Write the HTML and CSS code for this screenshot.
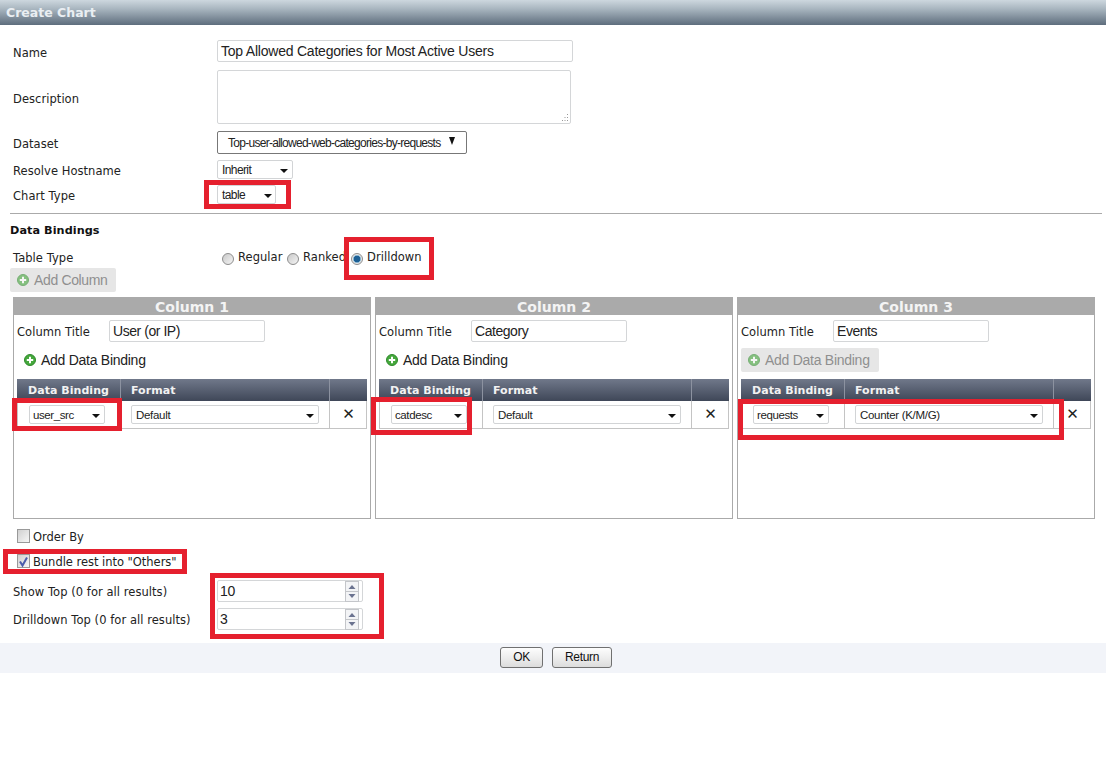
FILE: index.html
```html
<!DOCTYPE html>
<html lang="en">
<head>
<meta charset="utf-8">
<title>Create Chart</title>
<link rel="stylesheet" href="styles.css">
</head>
<body>
<svg class="defs" width="0" height="0" aria-hidden="true">
  <defs>
    <symbol id="plus" viewBox="0 0 12 12">
      <circle cx="6" cy="6" r="5.5" fill="#45a83c" stroke="#2f8a2c" stroke-width="1"/>
      <path d="M6 2.8v6.4M2.8 6h6.4" stroke="#fff" stroke-width="2"/>
    </symbol>
    <symbol id="spin" viewBox="0 0 14 21">
      <rect x=".5" y=".5" width="13" height="20" fill="#f3f4f6" stroke="#c4c6ca"/>
      <path d="M1 10.5h12" stroke="#c4c6ca"/>
      <path d="M7 4l3.5 4h-7z" fill="#6b7390"/>
      <path d="M7 17l3.5-4h-7z" fill="#6b7390"/>
    </symbol>
  </defs>
</svg>
<header class="titlebar">Create Chart</header>
<main class="main">
  <div class="row row-name"><span class="label">Name</span><div class="field field-name">Top Allowed Categories for Most Active Users</div></div>
  <div class="row row-desc"><span class="label">Description</span><div class="field field-desc"><svg class="grip" width="9" height="9" viewBox="0 0 9 9"><path d="M7.5 1v1M5 4v1M7.5 4v1M2.500 7v1M5 7v1M7.5 7v1" stroke="#999"/></svg></div></div>
  <div class="row row-dataset"><span class="label">Dataset</span><div class="select select-dataset"><span class="sel-text">Top-user-allowed-web-categories-by-requests</span><i class="caret caret-tall"></i></div></div>
  <div class="row row-resolve"><span class="label">Resolve Hostname</span><div class="select select-resolve"><span class="sel-text">Inherit</span><i class="caret"></i></div></div>
  <div class="row row-type"><span class="label">Chart Type</span><div class="select select-type"><span class="sel-text">table</span><i class="caret"></i></div></div>
  <hr class="divider">
  <h2 class="section">Data Bindings</h2>
  <div class="row row-table"><span class="label label-up">Table Type</span>
    <div class="radios">
      <span class="radio-item radio-regular"><i class="radio"></i>Regular</span>
      <span class="radio-item radio-ranked"><i class="radio"></i>Ranked</span>
      <span class="radio-item"><i class="radio radio-on"></i>Drilldown</span>
    </div>
  </div>
  <div class="add-column"><svg class="plus plus-off"><use href="#plus"/></svg>Add Column</div>

  <div class="columns">
    <section class="column">
      <h3 class="col-head">Column 1</h3>
      <div class="col-title"><span class="label label-up col-label">Column Title</span><div class="field field-col">User (or IP)</div></div>
      <div class="add-bind"><svg class="plus"><use href="#plus"/></svg>Add Data Binding</div>
      <div class="bind">
        <div class="bind-row bind-head"><span class="bh">Data Binding</span><span class="bh">Format</span><span class="bh"></span></div>
        <div class="bind-row bind-body"><span class="bc"><div class="select select-src"><span class="sel-text">user_src</span><i class="caret"></i></div></span><span class="bc"><div class="select select-fmt"><span class="sel-text">Default</span><i class="caret"></i></div></span><span class="bc bc-x">✕</span></div>
      </div>
    </section>
    <section class="column">
      <h3 class="col-head">Column 2</h3>
      <div class="col-title"><span class="label label-up col-label">Column Title</span><div class="field field-col">Category</div></div>
      <div class="add-bind"><svg class="plus"><use href="#plus"/></svg>Add Data Binding</div>
      <div class="bind">
        <div class="bind-row bind-head"><span class="bh">Data Binding</span><span class="bh">Format</span><span class="bh"></span></div>
        <div class="bind-row bind-body"><span class="bc"><div class="select select-src"><span class="sel-text">catdesc</span><i class="caret"></i></div></span><span class="bc"><div class="select select-fmt"><span class="sel-text">Default</span><i class="caret"></i></div></span><span class="bc bc-x">✕</span></div>
      </div>
    </section>
    <section class="column">
      <h3 class="col-head">Column 3</h3>
      <div class="col-title"><span class="label label-up col-label">Column Title</span><div class="field field-col">Events</div></div>
      <div class="add-bind add-bind-off"><svg class="plus plus-off"><use href="#plus"/></svg>Add Data Binding</div>
      <div class="bind">
        <div class="bind-row bind-head"><span class="bh">Data Binding</span><span class="bh">Format</span><span class="bh"></span></div>
        <div class="bind-row bind-body"><span class="bc"><div class="select select-src"><span class="sel-text">requests</span><i class="caret"></i></div></span><span class="bc"><div class="select select-fmt"><span class="sel-text">Counter (K/M/G)</span><i class="caret"></i></div></span><span class="bc bc-x">✕</span></div>
      </div>
    </section>
  </div>

  <label class="check check-order"><i class="box"></i><span class="check-text">Order By</span></label>
  <label class="check check-bundle"><i class="box"><svg width="13" height="13" viewBox="0 0 13 13"><path d="M3 6.500l2.500 4L10 2.500" fill="none" stroke="#4a5cab" stroke-width="2"/></svg></i><span class="check-text">Bundle rest into "Others"</span></label>
  <div class="row row-top row-show"><span class="label label-up">Show Top (0 for all results)</span><div class="field field-num">10<svg class="spin"><use href="#spin"/></svg></div></div>
  <div class="row row-top row-drill"><span class="label label-up">Drilldown Top (0 for all results)</span><div class="field field-num">3<svg class="spin"><use href="#spin"/></svg></div></div>
</main>
<footer class="footer"><button class="btn btn-ok">OK</button><button class="btn btn-return">Return</button></footer>

<div class="mark mark-type"></div>
<div class="mark mark-drill"></div>
<div class="mark mark-c1"></div>
<div class="mark mark-c2"></div>
<div class="mark mark-c3"></div>
<div class="mark mark-bundle"></div>
<div class="mark mark-top"></div>
</body>
</html>
```
FILE: styles.css
```css
* { box-sizing: border-box; }
html, body { margin: 0; padding: 0; }
body {
  position: relative;
  width: 1106px;
  height: 758px;
  overflow: hidden;
  background: #fff;
  color: #222;
  font: 11.500px "DejaVu Sans", Verdana, sans-serif;
  letter-spacing: .05px;
}
.defs { position: absolute; }
.titlebar {
  height: 25px;
  padding: 4px 0 0 6px;
  background: linear-gradient(#cdd7de, #a9b6c0 35%, #5e6d7d);
  color: #e9eef2;
  font-weight: bold;
  font-size: 12.500px;
  letter-spacing: 0;
  line-height: 17px;
}
.main { padding-top: 15px; height: 618px; }
.row {
  display: grid;
  grid-template-columns: 204px auto;
  justify-content: start;
  align-items: center;
  padding-left: 13px;
}
.label { line-height: 14px; padding-top: 3px; }
.label-up { padding-top: 1px; }
.field {
  background: #fff;
  border: 1px solid #d4d6d8;
  border-radius: 2px;
  font-family: "Liberation Sans", Arial, sans-serif;
  color: #222;
  letter-spacing: 0;
}
.field-name { width: 356px; height: 22px; padding-left: 3px; font-size: 14px; line-height: 20px; letter-spacing: -.22px; }
.row-desc { margin-top: 8px; }
.field-desc { position: relative; width: 354px; height: 54px; }
.grip { position: absolute; right: 1px; bottom: 1px; }
.row-dataset { margin-top: 7px; }
.row-resolve { margin-top: 6px; }
.row-type { margin-top: 6px; }
.select {
  display: flex;
  align-items: center;
  justify-content: space-between;
  background: #fff;
  border: 1px solid #d2d4d6;
  border-radius: 2px;
  font-family: "Liberation Sans", Arial, sans-serif;
  font-size: 12px;
  letter-spacing: -.6px;
  color: #222;
  white-space: nowrap;
}
.sel-text { display: block; }
.caret {
  display: block;
  flex: none;
  width: 0;
  height: 0;
  border-left: 4px solid transparent;
  border-right: 4px solid transparent;
  border-top: 4px solid #111;
  margin-top: 2px;
}
.caret-tall { border-left-width: 3.500px; border-right-width: 3.500px; border-top-width: 8px; margin-top: -3px; }
.select-dataset { width: 250px; height: 23px; padding: 0 11px 0 10px; border-color: #777; letter-spacing: -.72px; }
.select-resolve { width: 76px; height: 19px; padding: 0 4px 0 4px; }
.select-type { width: 59px; height: 19px; padding: 0 3px 0 4px; }
.divider { height: 1px; margin: 9px 4px 0 10px; border: 0; background: #aaa; }
.section { margin: 10px 0 0 10px; font-size: 11.250px; line-height: 14px; font-weight: bold; color: #111; }
.row-table { margin-top: 10px; height: 18px; }
.radios { display: flex; align-items: center; padding-left: 5px; }
.radio-item { display: flex; align-items: center; line-height: 14px; margin-top: -1px; }
.radio-regular { width: 65px; }
.radio-ranked { width: 64px; overflow: hidden; }
.radio {
  display: block;
  width: 12px;
  height: 12px;
  margin: 4px 4px 0 0;
  border: 1px solid #8d8d8d;
  border-radius: 50%;
  background: linear-gradient(135deg, #c9c9c9, #f4f4f4);
}
.radio-on { background: radial-gradient(circle, #1c5f94 0 3px, #7fb0cf 3.500px, #e8e8e8 4.500px); }
.add-column {
  display: flex;
  align-items: center;
  width: 106px;
  height: 24px;
  margin: 2px 0 0 10px;
  padding-left: 7px;
  background: #e6e6e6;
  border-radius: 2px;
  color: #8f8f8f;
  font: 14px/24px "Liberation Sans", Arial, sans-serif;
  letter-spacing: -.35px;
}
.plus { width: 12px; height: 12px; margin-right: 5px; flex: none; }
.plus-off { opacity: .6; }
.columns { display: flex; gap: 4px; margin: 5px 0 0 13px; }
.column { width: 358px; height: 222px; border: 1px solid #aaa; border-top: 0; }
.col-head {
  height: 18px;
  margin: 0 -1px;
  background: #aaa;
  color: #f4f4f4;
  font: bold 14px/20px "DejaVu Sans", Verdana, sans-serif;
  letter-spacing: 0;
  text-align: center;
}
.col-title { display: flex; align-items: center; margin: 5px 0 0 3px; }
.col-label { width: 92px; flex: none; }
.field-col { width: 156px; height: 22px; padding-left: 3px; font-size: 14px; line-height: 20px; letter-spacing: -.45px; }
.add-bind {
  display: flex;
  align-items: center;
  width: 138px;
  height: 24px;
  margin: 6px 0 0 3px;
  padding-left: 7px;
  border-radius: 2px;
  color: #222;
  font: 14px/24px "Liberation Sans", Arial, sans-serif;
  letter-spacing: -.27px;
}
.add-bind-off { background: #e6e6e6; color: #8f8f8f; }
.bind { margin: 7px 0 0 3px; width: 350px; border: 1px solid #c4c4c4; border-top: 0; }
.bind-row { display: grid; grid-template-columns: 103px 209px 1fr; margin: 0 -1px; }
.bind-head { height: 22px; background: linear-gradient(#70788a, #3f4758); }
.bh {
  padding-left: 10px;
  border-left: 1px solid #8c92a0;
  color: #f2f2f2;
  font: bold 11px/24px "DejaVu Sans", Verdana, sans-serif;
}
.bh:first-child { border-left: 0; padding-left: 11px; }
.bind-body { height: 27px; }
.bc { display: flex; align-items: flex-start; padding: 4px 0 0 10px; border-left: 1px solid #c4c4c4; }
.bc:first-child { padding-left: 11px; }
.bc-x { padding: 0; align-items: center; justify-content: center; font: 15px/27px "DejaVu Sans", sans-serif; color: #222; }
.select-src { width: 76px; height: 19px; padding: 0 4px 0 3px; font-size: 11.500px; letter-spacing: -.4px; }
.select-fmt { width: 188px; height: 19px; padding: 0 4px 0 4px; font-size: 11.500px; letter-spacing: -.3px; }
.check { display: flex; align-items: center; height: 14px; margin-left: 17px; line-height: 14px; letter-spacing: -.03px; }
.check-text { padding-top: 1px; }
.check-order { margin-top: 10px; }
.check-bundle { margin-top: 11px; }
.box {
  display: block;
  flex: none;
  width: 13px;
  height: 14px;
  margin-right: 3px;
  border: 1px solid #999;
  background: linear-gradient(135deg, #d0d0d0, #f6f6f6);
}
.box svg { display: block; margin: 0 -1px; }
.row-show { margin-top: 12px; }
.row-drill { margin-top: 6px; }
.field-num {
  position: relative;
  width: 146px;
  height: 22px;
  padding-left: 2px;
  font-size: 14px;
  line-height: 20px;
  letter-spacing: -.2px;
}
.spin { position: absolute; top: 0; right: 3px; width: 14px; height: 21px; }
.footer {
  display: flex;
  justify-content: center;
  align-items: flex-start;
  gap: 9px;
  height: 30px;
  padding: 4px 0 0 6px;
  background: #f2f4f9;
}
.btn {
  height: 21px;
  padding: 0;
  border: 1px solid #707070;
  border-radius: 3px;
  background: linear-gradient(#fdfdfd, #ececec 55%, #dcdcdc);
  color: #111;
  font: 12px/19px "Liberation Sans", Arial, sans-serif;
  letter-spacing: -.3px;
}
.btn-ok { width: 43px; }
.btn-return { width: 60px; }
.mark { position: absolute; border: 5px solid #e5202e; }
.mark-type { left: 204px; top: 180px; width: 87px; height: 29px; }
.mark-drill { left: 344px; top: 237px; width: 90px; height: 43px; }
.mark-c1 { left: 12px; top: 398px; width: 110px; height: 33px; }
.mark-c2 { left: 371px; top: 397px; width: 101px; height: 38px; }
.mark-c3 { left: 738px; top: 399px; width: 326px; height: 41px; }
.mark-bundle { left: 3px; top: 549px; width: 184px; height: 25px; }
.mark-top { left: 210px; top: 573px; width: 174px; height: 66px; }
```
